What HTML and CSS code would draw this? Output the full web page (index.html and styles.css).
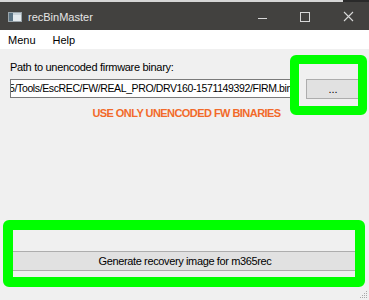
FILE: index.html
```html
<!DOCTYPE html>
<html>
<head>
<meta charset="utf-8">
<link rel="stylesheet" href="styles.css">
</head>
<body>
<div class="window">
  <div class="topstrip"></div>
  <div class="titlebar">
    <svg class="appicon" width="14" height="10" viewBox="0 0 14 10">
      <rect x="0.5" y="0.5" width="13" height="9" fill="#e4eaee" stroke="#9aa4aa"/>
      <rect x="1" y="1" width="4" height="8" fill="#5b7383"/>
      <rect x="5" y="1" width="8" height="2" fill="#c9d3da"/>
    </svg>
    <span class="title">recBinMaster</span>
    <div class="controls">
      <svg class="ctl" width="43" height="28" viewBox="0 0 43 28"><line x1="18" y1="16.5" x2="27" y2="16.5" stroke="#d8d8d8" stroke-width="1"/></svg>
      <svg class="ctl" width="43" height="28" viewBox="0 0 43 28"><rect x="17.5" y="10.5" width="9" height="9" fill="none" stroke="#d8d8d8" stroke-width="1"/></svg>
      <svg class="ctl" width="43" height="28" viewBox="0 0 43 28"><path d="M18 10 L27 19 M27 10 L18 19" stroke="#d8d8d8" stroke-width="1.1"/></svg>
    </div>
  </div>
  <div class="menubar">
    <span class="menuitem">Menu</span>
    <span class="menuitem">Help</span>
  </div>
  <div class="content">
    <div class="label">Path to unencoded firmware binary:</div>
    <div class="pathrow">
      <div class="pathinput"><span class="pathtext">C:/Users/user/Desktop/M365/Tools/EscREC/FW/REAL_PRO/DRV160-1571149392/FIRM.bin</span></div>
      <div class="btn browse">...</div>
    </div>
    <div class="warning">USE ONLY UNENCODED FW BINARIES</div>
    <div class="spacer"></div>
    <div class="btn generate">Generate recovery image for m365rec</div>
  </div>
  <div class="grip">
    <svg width="8" height="8" viewBox="0 0 8 8">
      <rect x="6" y="0" width="1" height="1" fill="#a8a8a8"/>
      <rect x="4" y="2" width="1" height="1" fill="#a8a8a8"/>
      <rect x="6" y="2" width="1" height="1" fill="#a8a8a8"/>
      <rect x="2" y="4" width="1" height="1" fill="#a8a8a8"/>
      <rect x="4" y="4" width="1" height="1" fill="#a8a8a8"/>
      <rect x="6" y="4" width="1" height="1" fill="#a8a8a8"/>
      <rect x="0" y="6" width="1" height="1" fill="#a8a8a8"/>
      <rect x="2" y="6" width="1" height="1" fill="#a8a8a8"/>
      <rect x="4" y="6" width="1" height="1" fill="#a8a8a8"/>
      <rect x="6" y="6" width="1" height="1" fill="#a8a8a8"/>
    </svg>
  </div>
  <div class="highlight hl-browse"></div>
  <div class="highlight hl-generate"></div>
</div>
</body>
</html>
```
FILE: styles.css
```css
* { box-sizing: border-box; }
html, body { margin: 0; padding: 0; }
body { width: 369px; height: 300px; overflow: hidden; background: #f0f0f0; }
.window { position: relative; width: 369px; height: 300px; display: flex; flex-direction: column; background: #f0f0f0; }
.topstrip { height: 2px; background: linear-gradient(to right, #d6d6d6 0, #d6d6d6 343px, #2a2a2a 343px); }
.titlebar { height: 28px; background: #42413f; display: flex; align-items: center; padding-left: 8px; }
.appicon { display: block; margin-top: 2px; }
.title { margin-left: 6px; color: #e6e6e6; font-family: "Liberation Sans", sans-serif; font-size: 11px; line-height: 28px; padding-top: 2px; }
.controls { margin-left: auto; display: flex; }
.ctl { display: block; }
.menubar { height: 19px; background: #ffffff; display: flex; align-items: center; padding-left: 8px; gap: 17px; font-family: "Liberation Sans", sans-serif; font-size: 11px; color: #000; }
.menuitem { line-height: 19px; padding-top: 1px; }
.content { flex: 1; display: flex; flex-direction: column; padding: 12px 9px 0 10px; font-family: "Liberation Sans", sans-serif; font-size: 11px; color: #000; }
.label { height: 12px; line-height: 12px; font-size: 11px; letter-spacing: -0.3px; }
.pathrow { display: flex; align-items: flex-start; margin-top: 6px; }
.pathinput { width: 284px; height: 19px; background: #fff; border: 1px solid #7a7a7a; display: flex; justify-content: flex-end; overflow: hidden; white-space: nowrap; padding-right: 1px; }
.pathtext { font-size: 10.5px; letter-spacing: -0.38px; line-height: 17px; }
.btn { background: #e1e1e1; border: 1px solid #adadad; display: flex; align-items: center; justify-content: center; font-size: 11px; color: #000; }
.browse { margin-left: auto; width: 54px; height: 20px; }
.warning { margin-top: 8px; text-align: center; font-weight: bold; font-size: 11px; letter-spacing: -0.55px; color: #f26a2a; line-height: 12px; padding-left: 3px; }
.spacer { flex: 1; }
.generate { height: 20px; margin: 0 -1px 29px -1px; letter-spacing: -0.37px; }
.grip { position: absolute; right: 1px; bottom: 1px; width: 8px; height: 8px; }
.grip svg { display: block; }
.highlight { position: absolute; border: 9px solid #00ff00; border-radius: 6px; }
.hl-browse { left: 290px; top: 55px; width: 77px; height: 60px; }
.hl-generate { left: 3px; top: 220px; width: 362px; height: 67px; border-width: 10px; }
```
